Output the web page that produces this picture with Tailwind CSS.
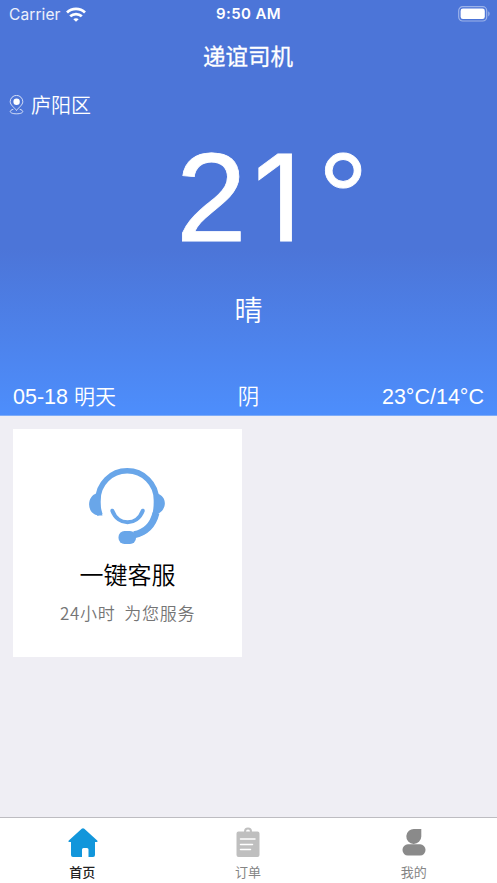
<!DOCTYPE html>
<html lang="zh-CN">
<head>
<meta charset="utf-8">
<title>递谊司机</title>
<script src="https://cdn.jsdelivr.net/npm/@tailwindcss/browser@4"></script>
</head>
<body class="w-[497px] h-[883px] overflow-hidden flex flex-col bg-[#efeef4] font-['Liberation_Sans','Noto_Sans_CJK_SC',sans-serif]">
  <section class="h-[416px] shrink-0 flex flex-col text-white bg-linear-to-b from-[#4c75d8] from-[60%] to-[#4d8efc] border-b border-[#7eacf8]">
    <div class="h-7 shrink-0 grid grid-cols-3 items-center pl-[9px] pr-[7px] font-['Inter',sans-serif]">
      <div class="flex items-center gap-[5px] pt-px text-[15.5px] tracking-[0.1px] text-white/90">
        <span>Carrier</span>
        <svg class="w-5 h-[15px]" viewBox="0 0 20 15" fill="none" stroke="white" stroke-width="2.800"><path d="M1 5.400C6 .7 14 .7 19 5.400"/><path d="M4.200 9.300c3.300-3 8.300-3 11.600 0"/><path d="M10 14.800 7.300 12.200c1.500-1.300 3.900-1.300 5.400 0z" fill="white" stroke="none"/></svg>
      </div>
      <div class="pt-px pr-[2px] text-center text-[15px] font-semibold tracking-[0.4px] whitespace-nowrap">9:50 AM</div>
      <svg class="justify-self-end w-8 h-4" viewBox="0 0 32 16"><rect x=".7" y=".7" width="28" height="14.300" rx="4" fill="none" stroke="white" stroke-opacity=".45" stroke-width="1.200"/><rect x="2.600" y="2.600" width="24.200" height="10.400" rx="2.300" fill="white"/><path d="M30.300 5.300c1.700.9 1.700 4.200 0 5.100z" fill="white" fill-opacity=".5"/></svg>
    </div>
    <h1 class="h-14 shrink-0 flex items-center justify-center pt-[3px] pr-px text-[22.5px] font-normal [-webkit-text-stroke:0.3px_white]">递谊司机</h1>
    <div class="h-[42px] shrink-0 flex items-center pl-[9px] gap-[7px] text-[20px] font-[350]">
      <svg class="w-[15px] h-5" viewBox="0 0 15 20" fill="none" stroke="white" stroke-width="1"><path d="M7.500 15.500C5.600 12.700 1.200 10 1.200 6.700a6.300 6.300 0 0 1 12.600 0c0 3.300-4.400 6-6.300 8.800z" stroke-opacity=".75"/><path d="M4.300 14.300C-.5 15.500.2 18.800 7.500 18.800s8-3.300 3.200-4.500" stroke-opacity=".75"/><circle cx="7.600" cy="6.700" r="3.200" fill="white" stroke="none"/></svg>
      <span class="pt-[2px]">庐阳区</span>
    </div>
    <div class="h-[148px] shrink-0 flex items-baseline pl-[176px] text-[127px] leading-[142px] [-webkit-text-stroke:0.8px_white]">
      <span>2</span><span class="w-[62px] text-center font-['Inter',sans-serif] text-[120px]">1</span><span class="ml-[9px]">°</span>
    </div>
    <div class="h-[72px] shrink-0 flex items-center justify-center pt-[4px] text-[28px] font-[350]">晴</div>
    <div class="h-[69px] shrink-0 grid grid-cols-3 items-end px-[13px] pb-[4px] text-[21.500px] leading-[28px] font-[350]">
      <span>05-18 <span class="text-[21px]">明天</span></span>
      <span class="text-center">阴</span>
      <span class="text-right">23°C/14°C</span>
    </div>
  </section>
  <main class="flex-1 pt-[13px] pl-[13px]">
    <article class="w-[229px] h-[228px] bg-white flex flex-col items-center pt-[37px]">
      <svg class="w-[78px] h-[78px] shrink-0 -ml-px" viewBox="0 0 78 78" fill="none" stroke="#69a6e9"><path d="M12 49C9.800 43 9.700 39 10 34a29.200 29.200 0 0 1 58.400 0C69 54 61 66.500 46 69" stroke-width="5.500"/><path d="M68 47C65 59 58 66.500 46 68.700" stroke-width="7"/><path d="M9 27.200C-2 30 -2 49.500 12 49.500H14.500C11.800 42 11.500 34 13 27zM69 27.500c11 2.500 11 19-3.500 22z" fill="#69a6e9" stroke="none"/><path d="M24.300 44.700c6 15.500 24.500 15.500 30.500 0" stroke-width="4" stroke-linecap="round"/><rect x="30.500" y="65" width="17.500" height="13" rx="6" fill="#69a6e9" stroke="none"/></svg>
      <h2 class="mt-[14px] h-9 leading-9 text-[24px] font-[350] text-black">一键客服</h2>
      <p class="mt-[7px] text-[17px] leading-6 tracking-[0.700px] font-[350] text-[#757575] whitespace-pre font-['Noto_Sans_CJK_SC',sans-serif]">24小时  为您服务</p>
    </article>
  </main>
  <nav class="h-[66px] shrink-0 grid grid-cols-3 bg-white border-t border-[#bdbcc1] text-[13px] leading-5 font-normal text-[#858585]">
    <a class="flex flex-col items-center pt-[9px] text-[#222] font-medium">
      <svg class="w-[30px] h-[31px]" viewBox="0 0 30 31" fill="#1296db"><path d="M13.700 1.700q1.300-1.100 2.600 0L29.200 13.400c.7.800.3 1.600-.5 1.600H27V28q0 2-2 2h-4.500v-7.500q0-1.500-1.500-1.500h-3.500q-1.500 0-1.500 1.500V30H5q-2 0-2-2V15H1.300c-.8 0-1.200-.8-.5-1.600z"/></svg>
      <span class="mt-[5px] -ml-px">首页</span>
    </a>
    <a class="flex flex-col items-center pt-[9px]">
      <svg class="w-6 h-[31px]" viewBox="0 0 24 31"><path d="M2.500 4.500H8a4 4 0 0 1 8 0h5.500q2 0 2 2V28q0 2-2 2h-19q-2 0-2-2V6.500q0-2 2-2z" fill="#bfbfbf"/><path d="M10 4.500a2 2 0 0 1 4 0z" fill="white"/><path d="M4.500 12H19M4.500 17.500H16.500M4.500 22.500H14.500" stroke="white" stroke-width="1.500" stroke-linecap="round"/></svg>
      <span class="mt-[5px] -ml-px">订单</span>
    </a>
    <a class="flex flex-col items-center pt-[9px]">
      <svg class="w-6 h-[31px] -ml-px" viewBox="0 0 24 31" fill="#8a8a8a"><path d="M12.500 2h6.800v7.500a7.500 7.500 0 1 1-6.800-7.500z"/><rect x=".5" y="17.300" width="23" height="11.200" rx="5.400"/></svg>
      <span class="mt-[5px] -ml-px">我的</span>
    </a>
  </nav>
</body>
</html>
